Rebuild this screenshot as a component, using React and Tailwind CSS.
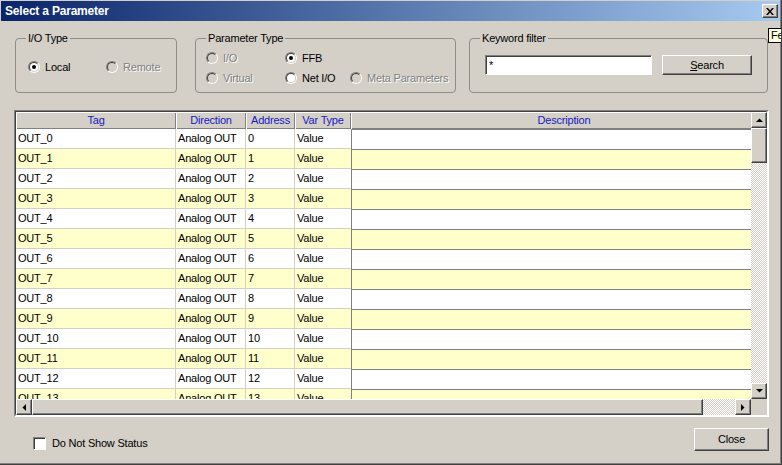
import React from "react";

const raised =
  "border border-t-white border-l-white border-r-[#404040] border-b-[#404040] shadow-[inset_-1px_-1px_0_#808080]";
const sunken =
  "border border-t-[#808080] border-l-[#808080] border-r-white border-b-white shadow-[inset_1px_1px_0_#404040]";
const checker =
  "bg-[repeating-conic-gradient(#d4d0c8_0_25%,#ffffff_0_50%)] bg-[length:2px_2px]";
const disabledText = "text-[#808080] [text-shadow:1px_1px_0_#ffffff]";

function Radio({ checked, disabled }) {
  return (
    <span className="w-[12px] h-[12px] rounded-full border border-t-[#808080] border-l-[#808080] border-r-white border-b-white flex items-center justify-center shrink-0">
      <span
        className={`w-[10px] h-[10px] rounded-full border border-t-[#404040] border-l-[#404040] border-r-[#d4d0c8] border-b-[#d4d0c8] flex items-center justify-center ${
          disabled ? "bg-[#d4d0c8]" : "bg-white"
        }`}
      >
        {checked && <span className="w-[4px] h-[4px] rounded-full bg-black" />}
      </span>
    </span>
  );
}

function RadioItem({ label, checked, disabled, w }) {
  return (
    <div className={`flex items-center h-[12px] ${w}`}>
      <Radio checked={checked} disabled={disabled} />
      <span className={`ml-[5px] leading-none ${disabled ? disabledText : "text-black"}`}>{label}</span>
    </div>
  );
}

function Group({ label, className, children }) {
  return (
    <div className={`relative h-[55px] border border-[#8f8d88] rounded-[4px] ${className}`}>
      <span className="absolute top-[-7px] left-[10px] px-[2px] bg-[#d4d0c8] leading-[13px] text-black">
        {label}
      </span>
      {children}
    </div>
  );
}

function Arrow({ dir }) {
  const pts = {
    up: "0,4 7,4 3.5,0.5",
    down: "0,0 7,0 3.5,3.5",
    left: "4,0 4,7 0.5,3.5",
    right: "0,0 0,7 3.5,3.5",
  }[dir];
  const vertical = dir === "up" || dir === "down";
  return (
    <svg width={vertical ? 7 : 4} height={vertical ? 4 : 7} viewBox={vertical ? "0 0 7 4" : "0 0 4 7"}>
      <polygon points={pts} fill="#000" />
    </svg>
  );
}

function ScrollBtn({ dir }) {
  return (
    <div className={`w-[16px] h-[16px] shrink-0 bg-[#d4d0c8] flex items-center justify-center ${raised}`}>
      <Arrow dir={dir} />
    </div>
  );
}

const rows = Array.from({ length: 14 }, (_, i) => i);

function HeaderCell({ w, children }) {
  return (
    <div
      className={`${w} h-full shrink-0 flex items-center justify-center bg-[#d4d0c8] text-[#1818c0] shadow-[inset_1px_1px_0_#ffffff,inset_-1px_-1px_0_#808080]`}
    >
      {children}
    </div>
  );
}

export default function App() {
  return (
    <div className="w-[782px] h-[465px] overflow-hidden bg-[#d4d0c8] border-r border-b border-[#404040] font-['Liberation_Sans',Arial,sans-serif] text-[11px] tracking-[-0.2px] text-black relative">
      <div className="w-full h-full border-r border-b border-[#808080] flex flex-col">
        {/* Title bar */}
        <div className="mt-[1px] ml-[1px] h-[20px] shrink-0 flex items-center bg-[linear-gradient(to_right,#0a246a,#a6caf0)]">
          <span className="pl-[4px] text-white font-bold text-[12px] leading-none">Select a Parameter</span>
          <div className={`ml-auto mr-[2px] w-[16px] h-[14px] bg-[#d4d0c8] flex items-center justify-center ${raised}`}>
            <svg width="8" height="7" viewBox="0 0 8 7">
              <path d="M0 0 L2 0 L4 2.5 L6 0 L8 0 L5 3.5 L8 7 L6 7 L4 4.5 L2 7 L0 7 L3 3.5 Z" fill="#000" />
            </svg>
          </div>
        </div>

        {/* Group boxes */}
        <div className="mt-[17px] pl-[15px] flex shrink-0">
          <Group label="I/O Type" className="w-[162px]">
            <div className="flex pt-[22px] pl-[12px]">
              <RadioItem label="Local" checked w="w-[78px]" />
              <RadioItem label="Remote" disabled w="w-[60px]" />
            </div>
          </Group>
          <Group label="Parameter Type" className="w-[261px] ml-[18px]">
            <div className="flex flex-col gap-[8px] pt-[13px] pl-[10px]">
              <div className="flex">
                <RadioItem label="I/O" disabled w="w-[79px]" />
                <RadioItem label="FFB" checked w="w-[65px]" />
              </div>
              <div className="flex">
                <RadioItem label="Virtual" disabled w="w-[79px]" />
                <RadioItem label="Net I/O" w="w-[65px]" />
                <RadioItem label="Meta Parameters" disabled w="w-[100px]" />
              </div>
            </div>
          </Group>
          <Group label="Keyword filter" className="w-[299px] ml-[13px]">
            <div className="flex pt-[16px] pl-[15px]">
              <div className={`w-[167px] h-[20px] bg-white pl-[3px] pt-[4px] leading-none ${sunken}`}>*</div>
              <div className={`ml-[10px] w-[90px] h-[20px] bg-[#d4d0c8] flex items-center justify-center ${raised}`}>
                <span className="leading-none">
                  <span className="underline">S</span>earch
                </span>
              </div>
            </div>
          </Group>
        </div>

        {/* Table */}
        <div
          className={`mt-[17px] ml-[14px] w-[755px] h-[307px] shrink-0 border-2 border-t-[#808080] border-l-[#808080] border-r-white border-b-white`}
        >
          <div className="w-full h-full border-t border-l border-[#404040] border-r-0 border-b-0 -mt-px -ml-px flex flex-col">
            <div className="flex h-[287px]">
              <div className="w-[735px] shrink-0 overflow-hidden flex flex-col">
                <div className="flex h-[17px] shrink-0">
                  <HeaderCell w="w-[160px]">Tag</HeaderCell>
                  <HeaderCell w="w-[70px]">Direction</HeaderCell>
                  <HeaderCell w="w-[49px]">Address</HeaderCell>
                  <HeaderCell w="w-[56px]">Var Type</HeaderCell>
                  <HeaderCell w="w-[426px]">Description</HeaderCell>
                </div>
                <div className="h-[270px] overflow-hidden flex flex-col">
                  {rows.map((i) => (
                    <div
                      key={i}
                      className={`flex h-[20px] shrink-0 ${i % 2 ? "bg-[#ffffcc]" : "bg-white"}`}
                    >
                      <div className="w-[160px] shrink-0 border-r border-b border-[#d4d0c8] pl-[2px] flex items-center">
                        OUT_{i}
                      </div>
                      <div className="w-[70px] shrink-0 border-r border-b border-[#d4d0c8] pl-[2px] flex items-center">
                        Analog OUT
                      </div>
                      <div className="w-[49px] shrink-0 border-r border-b border-[#d4d0c8] pl-[2px] flex items-center">
                        {i}
                      </div>
                      <div className="w-[56px] shrink-0 border-b border-[#d4d0c8] pl-[2px] flex items-center">
                        Value
                      </div>
                      <div className="w-[426px] shrink-0 border-t border-l border-[#808080]" />
                    </div>
                  ))}
                </div>
              </div>
              {/* vertical scrollbar */}
              <div className="w-[16px] flex flex-col">
                <ScrollBtn dir="up" />
                <div className={`h-[35px] shrink-0 bg-[#d4d0c8] ${raised}`} />
                <div className={`flex-1 ${checker}`} />
                <ScrollBtn dir="down" />
              </div>
            </div>
            {/* horizontal scrollbar */}
            <div className="flex h-[16px]">
              <ScrollBtn dir="left" />
              <div className={`w-[671px] h-[16px] shrink-0 bg-[#d4d0c8] ${raised}`} />
              <div className={`w-[32px] h-[16px] shrink-0 ${checker}`} />
              <ScrollBtn dir="right" />
              <div className="w-[16px] h-[16px] bg-[#d4d0c8]" />
            </div>
          </div>
        </div>

        {/* Bottom */}
        <div className="flex items-start">
          <div className="mt-[20px] ml-[33px] flex items-center">
            <div className={`w-[13px] h-[13px] bg-white ${sunken}`} />
            <span className="ml-[6px] leading-none">Do Not Show Status</span>
          </div>
          <div
            className={`mt-[11px] ml-auto mr-[11px] w-[75px] h-[23px] bg-[#d4d0c8] flex items-center justify-center ${raised}`}
          >
            <span className="leading-none">Close</span>
          </div>
        </div>
      </div>

      {/* tooltip */}
      <div className="absolute left-[768px] top-[28px] w-[40px] h-[15px] bg-[#ffffe1] border border-black pl-[2px] flex items-center leading-none">
        Fe
      </div>
    </div>
  );
}
